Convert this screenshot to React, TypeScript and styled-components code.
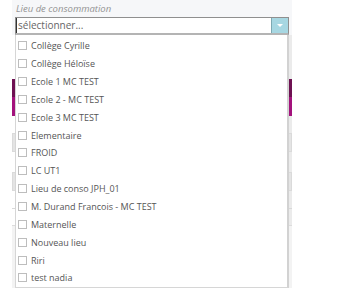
import React, { useState } from 'react';
import styled, { createGlobalStyle } from 'styled-components';

const lieux: string[] = [
    'Collège Cyrille',
    'Collège Héloïse',
    'Ecole 1 MC TEST',
    'Ecole 2 - MC TEST',
    'Ecole 3 MC TEST',
    'Elementaire',
    'FROID',
    'LC UT1',
    'Lieu de conso JPH_01',
    'M. Durand Francois - MC TEST',
    'Maternelle',
    'Nouveau lieu',
    'Riri',
    'test nadia',
];

const App: React.FC = () => {
    const [checked, setChecked] = useState<string[]>([]);

    const toggle = (name: string) => {
        setChecked((prev) =>
            prev.includes(name) ? prev.filter((n) => n !== name) : [...prev, name],
        );
    };

    return (
        <>
            <GlobalStyle />
            <Page>
                <Panel>
                    <Header>
                        <Label>Lieu de consommation</Label>
                        <Select>
                            <Placeholder>sélectionner...</Placeholder>
                            <ArrowButton>
                                <Arrow />
                            </ArrowButton>
                        </Select>
                    </Header>

                    {/* contenu du formulaire caché sous la liste */}
                    <Behind>
                        <Spacer $h={44} />
                        <HeaderBand>
                            <BandTop />
                            <BandBottom />
                        </HeaderBand>
                        <Spacer $h={17} />
                        <FieldStub />
                        <Spacer $h={20} />
                        <FieldStub />
                        <Spacer $h={17} />
                        <LineStub />
                        <Spacer $h={16} />
                        <LightStub />
                    </Behind>

                    <DropList>
                        {lieux.map((lieu) => (
                            <Item key={lieu} onClick={() => toggle(lieu)}>
                                <Box $on={checked.includes(lieu)} />
                                <ItemText>{lieu}</ItemText>
                            </Item>
                        ))}
                    </DropList>
                </Panel>
            </Page>
        </>
    );
};

export default App;

const GlobalStyle = createGlobalStyle`
    html, body {
        margin: 0;
        padding: 0;
        background: #ffffff;
    }
    body {
        font-family: 'Open Sans', 'Noto Sans', sans-serif;
    }
`;

const Page = styled.div`
    width: 338px;
    height: 296px;
    padding-left: 12px;
    box-sizing: border-box;
    overflow: hidden;
`;

const Panel = styled.div`
    position: relative;
    width: 280px;
    height: 296px;
`;

const Header = styled.div`
    background: #f6f7f9;
    padding: 2px 3px 0 3px;
`;

const Label = styled.div`
    font-size: 9.5px;
    font-style: italic;
    color: #939393;
    line-height: 13px;
    height: 15px;
    padding-left: 1px;
`;

const Select = styled.div`
    display: flex;
    align-items: stretch;
    height: 18px;
    width: 274px;
    background: #ffffff;
    border: 1px solid #8f8f8f;
    border-bottom: 2px solid #b4b4b4;
    box-sizing: border-box;
`;

const Placeholder = styled.div`
    flex: 1;
    font-size: 10px;
    line-height: 15px;
    color: #666666;
    padding-left: 1px;
    border-left: 1px solid #333333;
`;

const ArrowButton = styled.div`
    width: 16px;
    display: flex;
    align-items: center;
    justify-content: center;
    background: #a7d7e2;
    border-left: 1px solid #7ea9b3;
`;

const Arrow = styled.div`
    width: 0;
    height: 0;
    border-left: 3px solid transparent;
    border-right: 3px solid transparent;
    border-top: 3px solid #ffffff;
`;

const Behind = styled.div`
    display: flex;
    flex-direction: column;
    height: 253px;
    margin-right: 0;
    border-right: 3px solid #ebebeb;
`;

const Spacer = styled.div<{ $h: number }>`
    height: ${(p) => p.$h}px;
`;

const HeaderBand = styled.div`
    margin-right: -3px;
    display: flex;
    flex-direction: column;
`;

const BandTop = styled.div`
    height: 18px;
    background: #6e1152;
`;

const BandBottom = styled.div`
    height: 19px;
    background: #a3127c;
`;

const FieldStub = styled.div`
    height: 17px;
    margin-right: -3px;
    background: #e4e4e4;
    border: 1px solid #dadada;
`;

const LineStub = styled.div`
    height: 1px;
    margin-right: -3px;
    background: #d8d8d8;
`;

const LightStub = styled.div`
    flex: 1;
    margin-right: -3px;
    background: #f3f3f3;
    border-top: 1px solid #dcdcdc;
`;

const DropList = styled.div`
    position: absolute;
    left: 3px;
    top: 35px;
    width: 274px;
    height: 253px;
    box-sizing: border-box;
    background: #ffffff;
    border: 1px solid #d6d6d6;
    border-right: 2px solid #d2d2d2;
    border-top: none;
    padding-top: 2px;
`;

const Item = styled.div`
    display: flex;
    align-items: center;
    height: 17.85px;
    padding-left: 2px;
    cursor: pointer;
`;

const Box = styled.span<{ $on: boolean }>`
    width: 7px;
    height: 7px;
    border: 1px solid #bdbdbd;
    background: ${(p) => (p.$on ? '#a7d7e2' : '#ffffff')};
    margin-right: 4px;
    flex-shrink: 0;
`;

const ItemText = styled.span`
    font-size: 9px;
    color: #555555;
    white-space: nowrap;
`;
